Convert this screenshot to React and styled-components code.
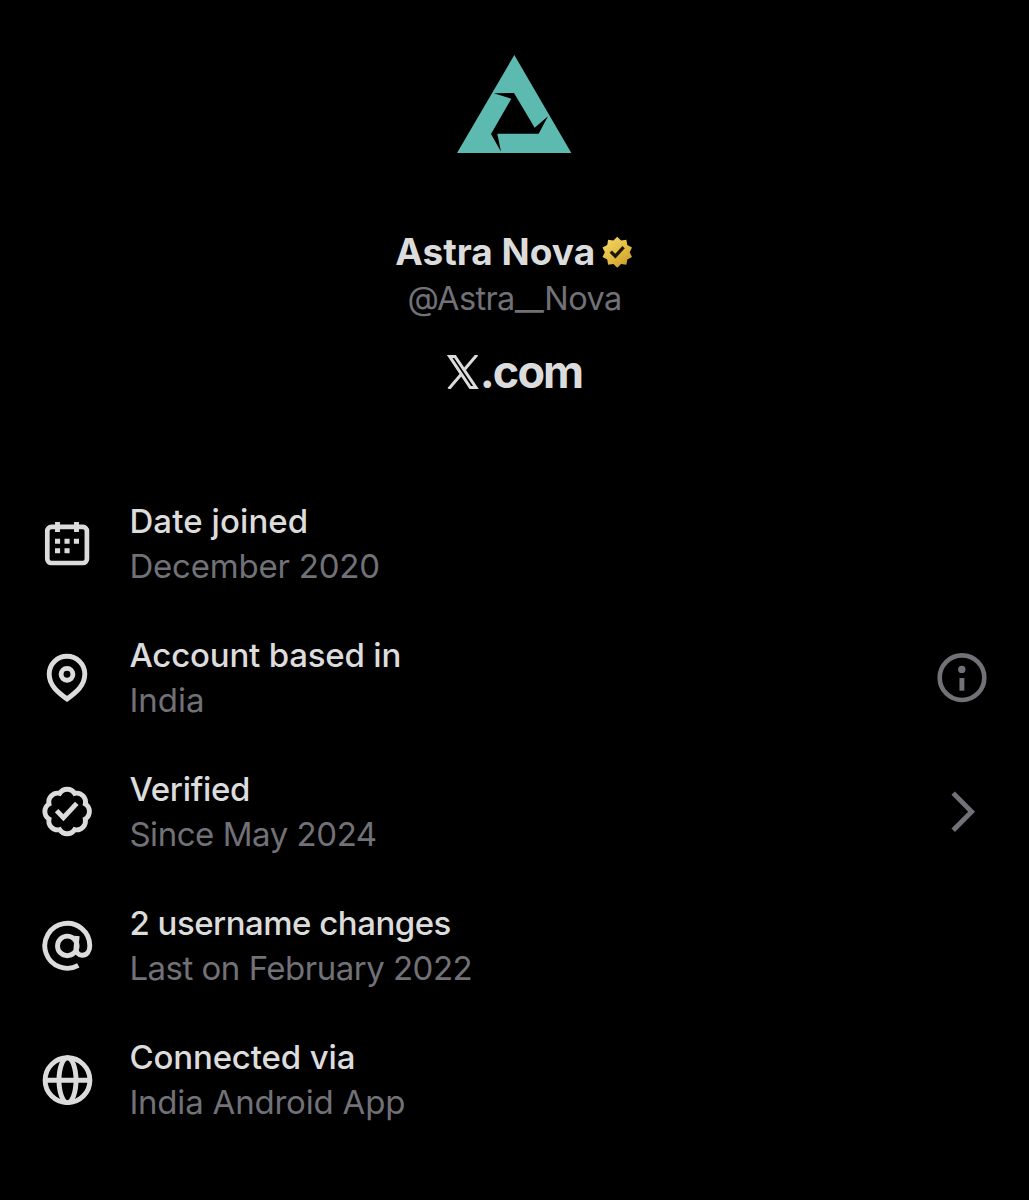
import React from 'react';
import styled, { createGlobalStyle } from 'styled-components';

const GlobalStyle = createGlobalStyle`
  :root {
    --black: #000000;
    --light: #dcdcdc;
    --gray: #717177;
    --teal: #5cbab1;
    --font-sans: Inter, 'Liberation Sans', sans-serif;
  }

  * {
    box-sizing: border-box;
  }

  body {
    margin: 0;
    background: var(--black);
    color: var(--light);
    font-family: var(--font-sans);
  }
`;

const StyledPage = styled.main`
  min-height: 1200px;
  background: var(--black);
  overflow: hidden;
`;

const StyledProfile = styled.header`
  display: flex;
  flex-direction: column;
  align-items: center;
  height: 477px;
  padding-top: 44px;
`;

const StyledLogo = styled.svg`
  display: block;
  width: 140px;
  height: 120px;
  margin-right: 1px;
`;

const StyledName = styled.h1`
  display: flex;
  align-items: center;
  gap: 6px;
  height: 46px;
  margin: 65px 0 0;
  font-size: 37px;
  font-weight: 650;
  line-height: 46px;
  white-space: nowrap;

  svg {
    width: 32.5px;
    height: 32.5px;
  }
`;

const StyledHandle = styled.p`
  margin: 1px 0 0;
  color: var(--gray);
  font-size: 32.5px;
  line-height: 46px;
  letter-spacing: -0.6px;
`;

const StyledSite = styled.div`
  display: flex;
  align-items: center;
  height: 56px;
  margin-top: 22px;
  font-size: 45px;
  font-weight: 750;
  line-height: 56px;
  letter-spacing: -1.9px;

  svg {
    width: 32px;
    height: 34px;
    margin-right: 1px;
  }
`;

const StyledList = styled.ul`
  margin: 0;
  padding: 0;
  list-style: none;
`;

const StyledRow = styled.li`
  display: flex;
  align-items: center;
  height: 134px;
  padding: 0 40px;
`;

const StyledIcon = styled.svg`
  flex: none;
  width: 54px;
  height: 54px;
  color: ${({ $muted }) => ($muted ? 'var(--gray)' : 'var(--light)')};
  fill: none;
  stroke: currentColor;
  stroke-width: 4.9;
`;

const StyledText = styled.div`
  flex: 1;
  margin-left: 35.4px;
  line-height: 45.5px;
  white-space: nowrap;
`;

const StyledLabel = styled.div`
  font-size: 33px;
  font-weight: 530;
  letter-spacing: ${({ $tracking }) => $tracking}px;
`;

const StyledValue = styled.div`
  color: var(--gray);
  font-size: 33px;
  font-weight: 400;
  letter-spacing: ${({ $tracking }) => $tracking}px;
`;

const Icon = ({ children, muted }) => (
  <StyledIcon viewBox="0 0 54 54" $muted={muted} aria-hidden="true">
    {children}
  </StyledIcon>
);

const CalendarIcon = () => (
  <Icon>
    <rect x="7.3" y="9.9" width="39.6" height="36.1" rx="4" strokeWidth="4.7" />
    <path d="M17.5 5v10M36.5 5v10" />
    <path d="M15 24.3h5.1M24.5 24.3h5.1M33.9 24.3h5.1M15 33.7h5.1M24.5 33.7h5.1" />
  </Icon>
);

const PinIcon = () => (
  <Icon>
    <path d="M27 48C18.2 41.4 9.2 34.8 9.2 23a17.8 17.8 0 0 1 35.6 0c0 11.8-9 18.4-17.8 25z" />
    <circle cx="27" cy="23.3" r="5.9" />
  </Icon>
);

const VerifiedIcon = () => (
  <Icon>
    <path
      transform="translate(.45 -.2) scale(2.225)"
      strokeWidth="2.2"
      d="M3.85 8.62a4 4 0 0 1 4.78-4.77 4 4 0 0 1 6.74 0 4 4 0 0 1 4.78 4.78 4 4 0 0 1 0 6.74 4 4 0 0 1-4.77 4.78 4 4 0 0 1-6.75 0 4 4 0 0 1-4.78-4.77 4 4 0 0 1 0-6.76Z"
    />
    <path d="M16.6 25.6l6.8 7.1 13.4-14.3" />
  </Icon>
);

const AtIcon = () => (
  <Icon>
    <circle cx="27.3" cy="26.9" r="9.8" />
    <path d="M37.2 17L36 28.8c-.4 4.5 2.4 7.4 6.1 7.4 4.6 0 7.7-3.8 7.7-9.4a22.5 22.5 0 1 0-11.5 19.6" />
  </Icon>
);

const GlobeIcon = () => (
  <Icon>
    <circle cx="27.5" cy="27.2" r="22.4" />
    <ellipse cx="27.5" cy="27.2" rx="8.5" ry="22.4" />
    <path d="M5 27.3h45" />
  </Icon>
);

const InfoIcon = () => (
  <Icon muted>
    <circle cx="27" cy="26.7" r="22.3" strokeWidth="4.6" />
    <circle cx="26.8" cy="18.4" r="3.7" fill="currentColor" stroke="none" />
    <path d="M26.9 27v12.7" />
  </Icon>
);

const ChevronIcon = () => (
  <Icon muted>
    <path d="M18.2 8.1l18.4 18.6-18.4 18.6" />
  </Icon>
);

const Logo = () => (
  <StyledLogo viewBox="0 0 420 360" aria-hidden="true">
    <path
      fill="var(--teal)"
      fillRule="evenodd"
      d="M211 33L382 327H39zM149 148l53 16-61 106 30 53-11-54h124l28-52-40 34-62-104z"
    />
  </StyledLogo>
);

const GoldBadge = () => (
  <svg viewBox="0 0 22 22" aria-hidden="true">
    <defs>
      <linearGradient id="gold" x1="4" y1="2" x2="18" y2="21" gradientUnits="userSpaceOnUse">
        <stop offset="0" stopColor="#f0d264" />
        <stop offset="0.5" stopColor="#e3bd41" />
        <stop offset="1" stopColor="#c99a2c" />
      </linearGradient>
    </defs>
    <path
      fill="url(#gold)"
      d="M13.596 3.011L11 .5 8.404 3.011l-3.576-.506-.624 3.558-3.19 1.692L2.6 11l-1.586 3.245 3.19 1.692.624 3.558 3.576-.506L11 21.5l2.596-2.511 3.576.506.624-3.558 3.19-1.692L19.4 11l1.586-3.245-3.19-1.692-.624-3.558-3.576.506z"
    />
    <path
      fill="#1c1503"
      stroke="#1c1503"
      strokeWidth="0.3"
      d="M6 11.39l3.74 3.74 6.2-6.77L14.47 7l-4.8 5.23-2.26-2.26L6 11.39z"
    />
  </svg>
);

const XLogo = () => (
  <svg viewBox="40 44 96 102" fill="none" stroke="currentColor" strokeWidth="9" aria-hidden="true">
    <path d="M48 48.5h16l63 93h-17z" />
    <path d="M130 43L93 87M45 146l39-46" />
  </svg>
);

const rows = [
  { icon: CalendarIcon, label: 'Date joined', value: 'December 2020', tracking: [0.1, -0.2] },
  { icon: PinIcon, label: 'Account based in', value: 'India', tracking: [-0.2, 0], action: InfoIcon },
  { icon: VerifiedIcon, label: 'Verified', value: 'Since May 2024', tracking: [-0.3, -0.45], action: ChevronIcon },
  { icon: AtIcon, label: '2 username changes', value: 'Last on February 2022', tracking: [-0.5, -0.5] },
  { icon: GlobeIcon, label: 'Connected via', value: 'India Android App', tracking: [-0.15, -0.2] },
];

const App = () => (
  <>
    <GlobalStyle />
    <StyledPage>
      <StyledProfile>
        <Logo />
        <StyledName>
          Astra Nova
          <GoldBadge />
        </StyledName>
        <StyledHandle>@Astra__Nova</StyledHandle>
        <StyledSite>
          <XLogo />
          <span>.com</span>
        </StyledSite>
      </StyledProfile>

      <StyledList>
        {rows.map(({ icon: RowIcon, label, value, tracking, action: Action }) => (
          <StyledRow key={label}>
            <RowIcon />
            <StyledText>
              <StyledLabel $tracking={tracking[0]}>{label}</StyledLabel>
              <StyledValue $tracking={tracking[1]}>{value}</StyledValue>
            </StyledText>
            {Action && <Action />}
          </StyledRow>
        ))}
      </StyledList>
    </StyledPage>
  </>
);

export default App;
